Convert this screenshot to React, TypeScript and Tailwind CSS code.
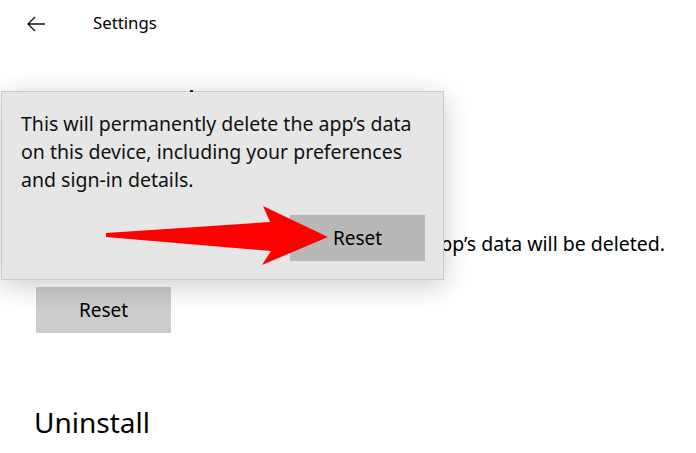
import React from "react";

export default function App() {
  const font = { fontFamily: '"Noto Sans", "Open Sans", Arial, sans-serif' };
  return (
    <div className="relative w-[696px] h-[453px] bg-white overflow-hidden text-black" style={font}>
      {/* header */}
      <div className="flex items-center h-[48px] pl-[27px]">
        <svg width="19" height="16" viewBox="0 0 19 16" className="shrink-0">
          <path d="M8 1 L1 8 L8 15 M1 8 H18" fill="none" stroke="#111" strokeWidth="1.3" />
        </svg>
        <span className="ml-[47px] text-[16.8px] leading-none mt-[-1px]">Settings</span>
      </div>

      {/* page content */}
      <div className="pl-[34px] flex flex-col">
        <div className="h-[40px] mt-[40px] text-[26px] leading-[40px]">Reset</div>
        <div className="mt-[102px] ml-[10px] text-[19.5px] leading-[28px] whitespace-nowrap">
          If this app isn’t working right, reset it. The app’s data will be deleted.
        </div>
        <div className="mt-[29px] ml-[2px] w-[135px] h-[46px] bg-[#cccccc] flex items-center justify-center text-[19px]">
          Reset
        </div>
        <div className="mt-[69px] text-[28px] leading-[40px]">Uninstall</div>
      </div>

      {/* flyout */}
      <div className="absolute left-[1px] top-[91px] w-[443px] h-[189px] bg-[#e6e6e6] border border-[#cbcbcb] shadow-[0_6px_26px_rgba(0,0,0,0.2)] flex flex-col">
        <div className="absolute left-[188px] top-[-2px] w-[3px] h-[2px] bg-[#222]" />
        <p className="pl-[19px] pr-[20px] pt-[18px] text-[19.5px] leading-[28px] text-[#111]">
          This will permanently delete the app’s data on this device, including your preferences and sign-in details.
        </p>
        <div className="mt-auto mb-[18px] mr-[18px] self-end w-[135px] h-[46px] bg-[#b8b8b8] flex items-center justify-center text-[19px]">
          Reset
        </div>
      </div>

      {/* red arrow */}
      <svg className="absolute left-0 top-0 pointer-events-none" width="696" height="453" viewBox="0 0 696 453">
        <polygon
          points="106,233 270,222 263,206 328,237 262,265 271,251 106,237"
          fill="#ff0000"
        />
      </svg>
    </div>
  );
}
